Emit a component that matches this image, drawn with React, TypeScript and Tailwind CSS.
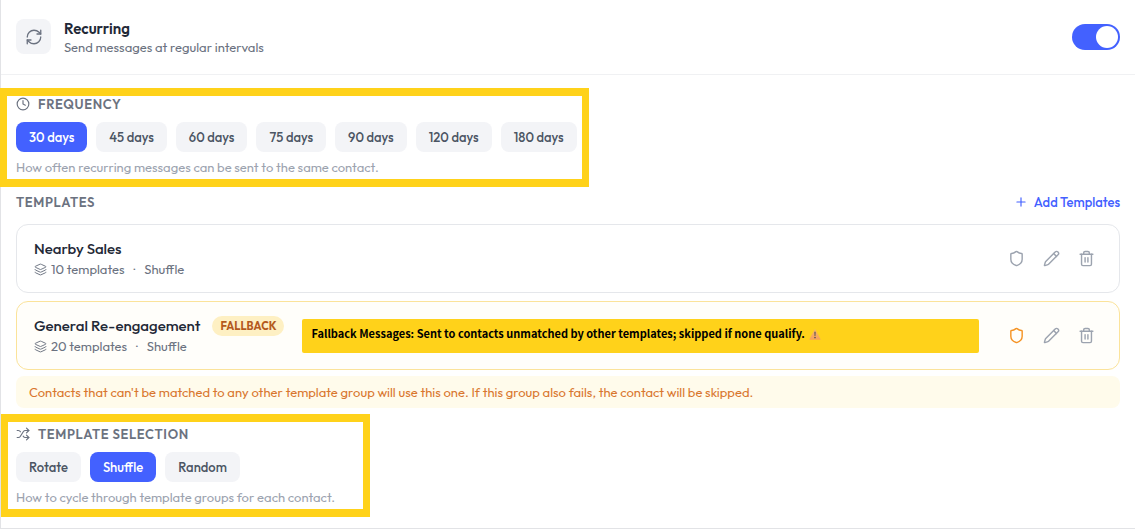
import React, { useState } from "react";
import {
  Clock,
  Layers,
  Pencil,
  Plus,
  RefreshCw,
  Shield,
  Shuffle,
  Trash2,
} from "lucide-react";
import clsx from "clsx";

const FREQUENCIES = [30, 45, 60, 75, 90, 120, 180];
const SELECTIONS = ["Rotate", "Shuffle", "Random"];

interface PillProps {
  active: boolean;
  onClick: () => void;
  children: React.ReactNode;
}

const Pill = ({ active, onClick, children }: PillProps) => (
  <button
    type="button"
    aria-pressed={active}
    onClick={onClick}
    className={clsx(
      "h-[30px] rounded-lg px-[13px] pt-0.5 text-[13px] font-medium whitespace-nowrap",
      active ? "bg-[#4361ff] text-white" : "bg-[#f3f4f7] text-[#4b5563]"
    )}
  >
    {children}
  </button>
);

const SectionTitle = ({ children }: { children: React.ReactNode }) => (
  <h3 className="flex items-center gap-2 text-[13px] leading-4 font-semibold tracking-wider text-[#6b7280] uppercase">
    {children}
  </h3>
);

const WarningSign = () => (
  <svg width="12" height="12" viewBox="0 0 12 12" aria-hidden="true">
    <defs>
      <linearGradient id="warning" x1="0" y1="0" x2="0" y2="1">
        <stop offset="0" stopColor="#f5bd62" />
        <stop offset="1" stopColor="#f7a05c" />
      </linearGradient>
    </defs>
    <path
      d="M6 .8 11.5 11a.5.5 0 0 1-.5.7H1a.5.5 0 0 1-.5-.7Z"
      fill="url(#warning)"
    />
    <path d="M5.4 3.8h1.2L6.4 8h-.8Z" fill="#4a4a5e" />
    <circle cx="6" cy="9.6" r=".8" fill="#4a4a5e" />
  </svg>
);

interface TemplateGroupProps {
  name: string;
  count: number;
  fallback?: boolean;
  children?: React.ReactNode;
}

const TemplateGroup = ({
  name,
  count,
  fallback,
  children,
}: TemplateGroupProps) => (
  <li
    className={clsx(
      "flex items-center rounded-xl border py-[13px] pr-[19px] pl-[17px]",
      fallback ? "border-[#fbe39a] bg-[#fffefa]" : "border-[#e5e7eb] bg-white"
    )}
  >
    <div>
      <div className="flex items-center gap-3">
        <h4 className="text-[15px] leading-[21px] font-medium whitespace-nowrap text-[#1f2937]">
          {name}
        </h4>
        {fallback && (
          <span className="rounded-full bg-[#fef0c3] px-2 text-[11px] leading-5 font-bold text-[#b45a1c]">
            FALLBACK
          </span>
        )}
      </div>
      <p className="flex items-center text-[13px] leading-5 text-[#6b7280]">
        <Layers size={13} strokeWidth={1.75} className="mr-1" />
        {count} templates
        <span className="mx-[9px]">·</span>
        Shuffle
      </p>
    </div>
    {children}
    <div className="ml-auto flex gap-2 text-[#9ca3af]">
      <button
        type="button"
        aria-label="Set as fallback"
        className={clsx("p-[5px]", fallback && "text-[#f59324]")}
      >
        <Shield size={17} />
      </button>
      <button type="button" aria-label="Edit" className="p-[5px]">
        <Pencil size={17} />
      </button>
      <button type="button" aria-label="Delete" className="p-[5px]">
        <Trash2 size={17} />
      </button>
    </div>
  </li>
);

export default function App() {
  const [enabled, setEnabled] = useState(true);
  const [days, setDays] = useState(30);
  const [selection, setSelection] = useState("Shuffle");

  return (
    <main className="border-b border-l border-[#e2e3e6] bg-white pb-[11px] font-[Outfit,Lato,sans-serif]">
      <header className="flex items-center border-b border-[#f0f1f3] px-[15px] pt-[17px] pb-[18px]">
        <span className="flex size-[35px] items-center justify-center rounded-lg bg-[#f3f4f7] text-[#6b7280]">
          <RefreshCw size={18} strokeWidth={1.75} />
        </span>
        <div className="ml-[13px] pt-[3px]">
          <h2 className="text-[15px] leading-[18px] font-semibold text-[#1f2937]">
            Recurring
          </h2>
          <p className="text-[13px] leading-[18px] text-[#6b7280]">
            Send messages at regular intervals
          </p>
        </div>
        <input
          type="checkbox"
          role="switch"
          aria-label="Recurring"
          checked={enabled}
          onChange={(e) => setEnabled(e.target.checked)}
          className="ml-auto flex h-[26px] w-12 appearance-none items-center rounded-full bg-gray-300 px-0.5 before:size-[22px] before:rounded-full before:bg-white checked:justify-end checked:bg-[#4361ff]"
        />
      </header>

      <section className="mt-[13px] -ml-px w-fit border-x-[7px] border-y-8 border-[#ffd21a] pr-[5px] pb-0.5 pl-[9px]">
        <SectionTitle>
          <Clock size={14} />
          Frequency
        </SectionTitle>
        <div className="mt-2.5 flex gap-[9px]">
          {FREQUENCIES.map((n) => (
            <Pill key={n} active={days === n} onClick={() => setDays(n)}>
              {n} days
            </Pill>
          ))}
        </div>
        <p className="mt-[5px] text-[13px] leading-5 text-[#9ca3af]">
          How often recurring messages can be sent to the same contact.
        </p>
      </section>

      <section className="mt-1 px-[15px]">
        <div className="flex items-center justify-between">
          <SectionTitle>Templates</SectionTitle>
          <button
            type="button"
            className="flex items-center gap-1.5 text-[13px] leading-[22px] font-medium text-[#4361ff]"
          >
            <Plus size={14} />
            Add Templates
          </button>
        </div>
        <ul className="mt-[11px] flex flex-col gap-2">
          <TemplateGroup name="Nearby Sales" count={10} />
          <TemplateGroup name="General Re-engagement" count={20} fallback>
            <p className="mr-6 ml-[18px] flex h-[34px] flex-1 items-center gap-1 rounded-xs bg-[#ffd21a] pb-1 pl-[9px] font-['Noto_Sans_CJK_SC',sans-serif] text-[11px] font-bold text-black">
              Fallback Messages: Sent to contacts unmatched by other templates;
              skipped if none qualify.
              <WarningSign />
            </p>
          </TemplateGroup>
        </ul>
        <p className="mt-1.5 rounded-lg bg-[#fffbeb] px-[13px] text-[13px] leading-8 text-[#d9772f]">
          Contacts that can't be matched to any other template group will use
          this one. If this group also fails, the contact will be skipped.
        </p>
      </section>

      <section className="mt-1.5 w-fit border-x-[7px] border-y-8 border-[#ffd21a] pt-1 pr-7 pb-0.5 pl-2">
        <SectionTitle>
          <Shuffle size={14} />
          Template Selection
        </SectionTitle>
        <div className="mt-2.5 flex gap-[9px]">
          {SELECTIONS.map((name) => (
            <Pill
              key={name}
              active={selection === name}
              onClick={() => setSelection(name)}
            >
              {name}
            </Pill>
          ))}
        </div>
        <p className="mt-[5px] text-[13px] leading-5 text-[#9ca3af]">
          How to cycle through template groups for each contact.
        </p>
      </section>
    </main>
  );
}
